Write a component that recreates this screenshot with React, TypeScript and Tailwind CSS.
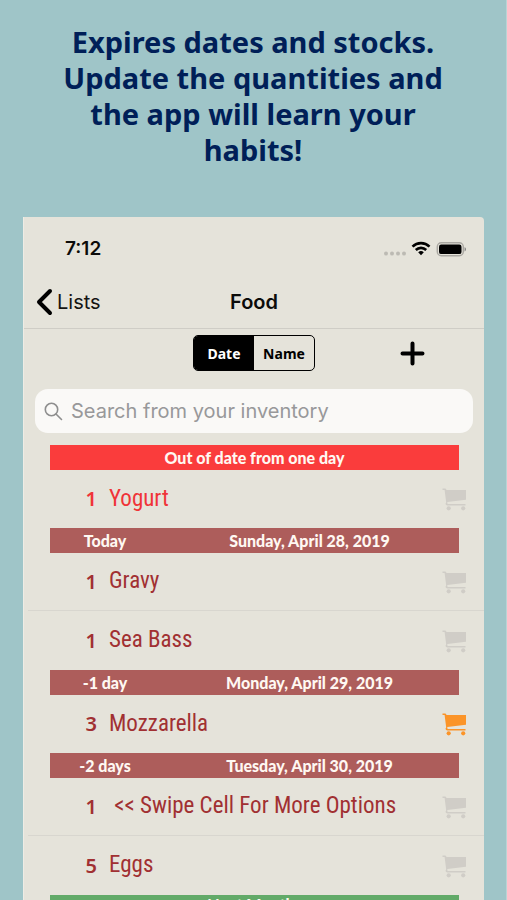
import React, { useState } from 'react'

type Item = { id: string, qty: number, name: string }
type Section = { left?: string, title: string, bar: string, text: string, items: Item[] }

const sections: Section[] = [
    {
        title: 'Out of date from one day', bar: 'items-center bg-[#fa3c3c]', text: 'text-[#f03338]',
        items: [{ id: 'yogurt', qty: 1, name: 'Yogurt' }],
    },
    {
        left: 'Today', title: 'Sunday, April 28, 2019', bar: 'items-center bg-[#ad5d5b]', text: 'text-[#a13032]',
        items: [{ id: 'gravy', qty: 1, name: 'Gravy' }, { id: 'seabass', qty: 1, name: 'Sea Bass' }],
    },
    {
        left: '-1 day', title: 'Monday, April 29, 2019', bar: 'items-center bg-[#ad5d5b]', text: 'text-[#a13032]',
        items: [{ id: 'mozzarella', qty: 3, name: 'Mozzarella' }],
    },
    {
        left: '-2 days', title: 'Tuesday, April 30, 2019', bar: 'items-center bg-[#ad5d5b]', text: 'text-[#a13032]',
        items: [{ id: 'swipe', qty: 1, name: '\u00a0<< Swipe Cell For More Options' }, { id: 'eggs', qty: 5, name: 'Eggs' }],
    },
    { title: 'Next Months', bar: 'items-start leading-5 bg-[#62aa68]', text: 'text-[#62aa68]', items: [] },
]

function CartIcon() {
    return (
        <svg width="25" height="24" viewBox="0 0 25 24" fill="currentColor">
            <path d="M0.5 1.5h3l1.2 1.6H24v9.6L5.2 15l.4 1.9H23.5v1.5H5.2c-1.6 0-2.2-1.8-1-2.8L2.6 3H.5z" />
            <circle cx="6.7" cy="21.3" r="2.1" />
            <circle cx="21.2" cy="21.3" r="2.1" />
        </svg>
    )
}

function StatusBar() {
    return (
        <div className="flex items-center justify-between h-[58px] pt-1.5 pl-[41px] pr-[18px]">
            <span className="text-[19px] font-semibold text-[#0c0c0a]">7:12</span>
            <svg width="84" height="18" viewBox="0 0 84 18">
                <g fill="#bcbab3">
                    <circle cx="4" cy="13.5" r="2" />
                    <circle cx="10" cy="13.5" r="2" />
                    <circle cx="16" cy="13.5" r="2" />
                    <circle cx="22" cy="13.5" r="2" />
                </g>
                <g fill="none" stroke="#000" strokeWidth="2.6">
                    <path d="M30.5 6.6a12.2 12.2 0 0 1 17 0" />
                    <path d="M33.8 10a7.4 7.4 0 0 1 10.4 0" />
                </g>
                <path d="M36.2 12.3a4 4 0 0 1 5.6 0L39 15.3z" />
                <rect x="55.3" y="2.8" width="26" height="13" rx="4" fill="none" stroke="#a9a7a1" strokeWidth="1.4" />
                <rect x="57" y="4.5" width="22.5" height="9.6" rx="2.2" />
                <path d="M82.6 7.2c1.7.7 1.7 3.6 0 4.3z" fill="#777" />
            </svg>
        </div>
    )
}

function App() {
    const [sortBy, setSortBy] = useState('date')
    const [search, setSearch] = useState('')
    const [cart, setCart] = useState<string[]>(['mozzarella'])

    const toggleCart = (id: string) => {
        setCart(cart.includes(id) ? cart.filter((c) => c !== id) : [...cart, id])
    }

    return (
        <div className="h-screen overflow-hidden bg-[#9fc5c8] font-['Inter',sans-serif] border-r border-[#b9d4d5]">
            <h1 className="pt-6 h-[217px] px-14 text-center font-['Noto_Sans',sans-serif] font-bold text-[29px] leading-[36px] text-[#001f58]">
                Expires dates and stocks.<br />Update the quantities and<br />the app will learn your<br />habits!
            </h1>

            <main className="ml-[23px] mr-[22px] bg-[#e5e3da] rounded-tr-sm border-l border-[#eeece5]">
                <StatusBar />

                <header className="grid grid-cols-3 items-center h-[54px] px-3 border-b border-[#cfcdc6]">
                    <a href="#lists" className="flex items-center gap-1 text-[20px] text-[#151513]">
                        <svg width="17" height="28" viewBox="0 0 17 28" fill="none" stroke="#000" strokeWidth="4" strokeLinecap="round" strokeLinejoin="round">
                            <path d="M14 3L3 14l11 11" />
                        </svg>
                        Lists
                    </a>
                    <h2 className="text-center text-[20px] font-semibold text-[#0c0c0a]">Food</h2>
                </header>

                <div className="grid grid-cols-[1fr_auto_1fr] items-center h-12">
                    <div className="col-start-2 flex h-9 w-[122px] rounded-[5px] border border-black overflow-hidden font-['Noto_Sans',sans-serif] text-[14px] font-bold">
                        <button onClick={() => setSortBy('date')} className={sortBy === 'date' ? 'flex-1 bg-black text-white' : 'flex-1 text-black'}>
                            Date
                        </button>
                        <button onClick={() => setSortBy('name')} className={sortBy === 'name' ? 'flex-1 bg-black text-white' : 'flex-1 text-black'}>
                            Name
                        </button>
                    </div>
                    <button aria-label="Add item" className="justify-self-end mr-[59px]">
                        <svg width="25" height="25" viewBox="0 0 25 25" stroke="#000" strokeWidth="4" strokeLinecap="round">
                            <path d="M12.5 2.5v20M2.5 12.5h20" />
                        </svg>
                    </button>
                </div>

                <div className="px-[11px] py-3">
                    <label className="flex items-center h-11 gap-2 pl-[9px] rounded-[13px] bg-[#faf9f7]">
                        <svg width="19" height="19" viewBox="0 0 19 19" fill="none" stroke="#8e8e8e" strokeWidth="1.6" strokeLinecap="round">
                            <circle cx="7.5" cy="7.5" r="6.2" />
                            <path d="M12 12l5.5 5.5" />
                        </svg>
                        <input
                            type="text"
                            aria-label="Search from your inventory"
                            placeholder="Search from your inventory"
                            value={search}
                            onChange={(e) => setSearch(e.target.value)}
                            className="flex-1 min-w-0 text-[20px] outline-none placeholder:text-[#98989a]"
                        />
                    </label>
                </div>

                {sections.map((section) => (
                    <section key={section.title}>
                        <h3 className={`${section.bar} flex h-[25px] ml-[26px] mr-[25px] font-['Lato',sans-serif] text-[16px] font-black text-[#fff8f2]`}>
                            {section.left && <span className="w-[110px] text-center">{section.left}</span>}
                            <span className="flex-1 text-center">{section.title}</span>
                        </h3>

                        <ul className="divide-y divide-[#d8d6cf] ml-1">
                            {section.items.map((item) => (
                                <li key={item.id} className={`${section.text} flex items-center h-[58px] not-first:h-[59px] pr-[17px] font-['Roboto_Condensed','Lato',sans-serif] text-[23px]`}>
                                    <span className="shrink-0 w-[69px] text-right font-['Noto_Sans',sans-serif] text-[20px] font-semibold">{item.qty}</span>
                                    <span className="flex-1 ml-3 whitespace-nowrap">{item.name}</span>
                                    <button
                                        aria-label={`Add ${item.name.trim()} to cart`}
                                        onClick={() => toggleCart(item.id)}
                                        className={cart.includes(item.id) ? 'text-[#fb9428]' : 'text-[#d0cdc7]'}
                                    >
                                        <CartIcon />
                                    </button>
                                </li>
                            ))}
                        </ul>
                    </section>
                ))}
            </main>
        </div>
    )
}

export default App
